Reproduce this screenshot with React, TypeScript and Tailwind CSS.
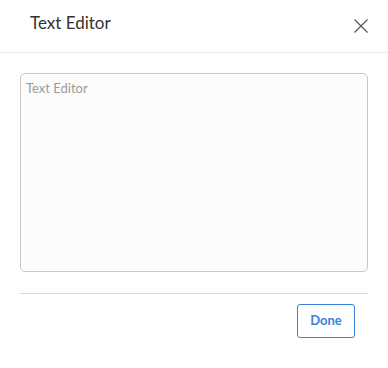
import React from "react";

export default function App() {
  return (
    <div
      className="w-[388px] h-[368px] bg-white"
      style={{ fontFamily: 'Lato, "Open Sans", sans-serif' }}
    >
      <div className="h-[53px] border-b border-[#e9ecee] flex items-center justify-between pl-[30px] pr-[19px]">
        <span className="text-[17px] text-[#333] leading-none -mt-[7px]">Text Editor</span>
        <button className="w-[16px] h-[16px] flex items-center justify-center">
          <svg width="16" height="16" viewBox="0 0 16 16" fill="none" stroke="#555" strokeWidth="1.2">
            <path d="M1.5 1.5 L14.5 14.5 M14.5 1.5 L1.5 14.5" />
          </svg>
        </button>
      </div>
      <div className="px-[20px] pt-[20px]">
        <textarea
          placeholder="Text Editor"
          className="block w-full h-[199px] resize-none rounded-[5px] border border-[#c8c8c8] bg-[#fcfcfc] px-[5px] py-[5px] text-[13px] text-[#333] placeholder:text-[#9a9a9a] outline-none"
          style={{ fontFamily: 'Lato, "Open Sans", sans-serif' }}
        />
        <div className="mt-[21px] border-t border-[#d9d9d9]" />
        <div className="flex justify-end pr-[13px] mt-[10px]">
          <button className="w-[58px] h-[34px] rounded-[3px] border border-[#3b82e0] text-[#3b7fdc] text-[13px] font-bold">
            Done
          </button>
        </div>
      </div>
    </div>
  );
}
